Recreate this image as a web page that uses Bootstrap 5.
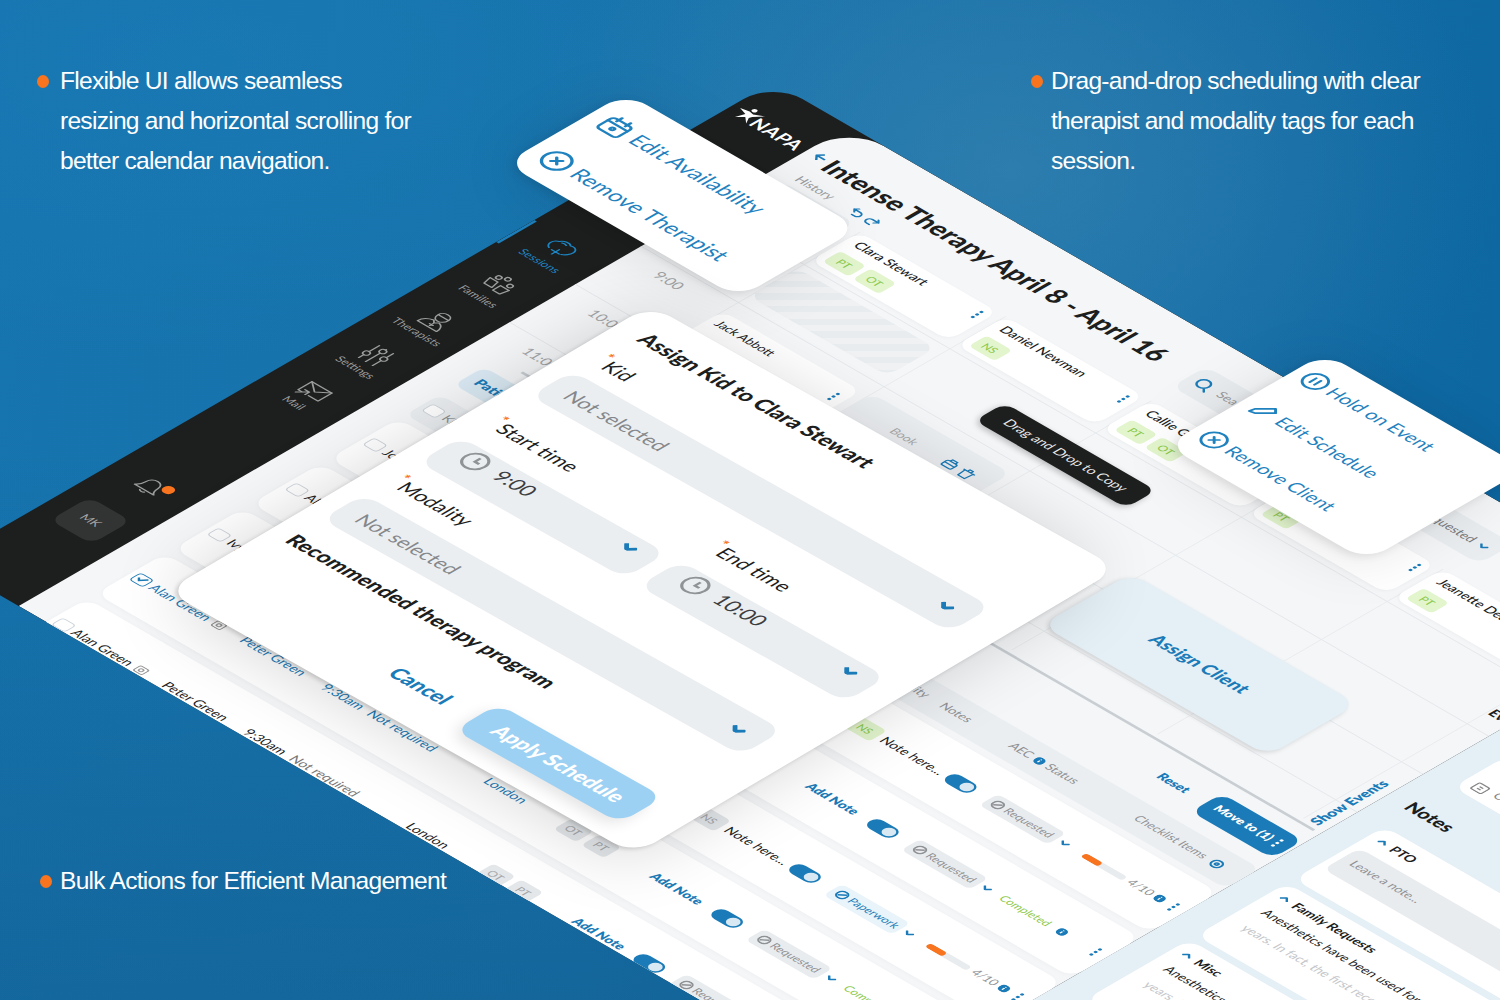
<!DOCTYPE html>
<html lang="en"><head><meta charset="utf-8"><title>NAPA</title>
<link href="https://cdn.jsdelivr.net/npm/bootstrap@5.3.0/dist/css/bootstrap.min.css" rel="stylesheet">
<style>
html,body{margin:0;height:100%;overflow:hidden}
body{font-family:Lato,"Liberation Sans",sans-serif;color:#1d1e1e}
.stage{position:relative;width:1500px;height:1000px;overflow:hidden;background:linear-gradient(180deg,rgba(8,60,100,0) 45%,rgba(8,60,100,.22) 100%),radial-gradient(ellipse 480px 380px at 1010px 170px,rgba(70,140,180,.5),rgba(70,140,180,0)),radial-gradient(ellipse 700px 300px at 200px 60px,rgba(30,130,190,.35),rgba(30,130,190,0)),linear-gradient(100deg,#1674ae 0%,#1772aa 45%,#126ca6 75%,#0c659f 100%)}
.iso{position:absolute;left:0;top:0;width:1400px;height:960px;transform-origin:0 0;transform:matrix(.865,.5,-.865,.5,773,82)}
.appwin{width:100%;height:100%;background:#1d1e1e;border-radius:34px;overflow:hidden;display:flex}
/* sidebar */
.sidebar{width:88px;flex:none;display:flex;flex-direction:column;align-items:center;color:#9b9c9c}
.logo{height:272px;padding-top:36px;color:#fff;font-weight:700;font-size:19px;letter-spacing:.5px}
.logo svg{width:24px;height:22px;fill:#fff;margin-right:-3px}
.sideitem{position:relative;width:88px;height:71px;display:flex;flex-direction:column;align-items:center;font-size:11.5px;line-height:14px;text-align:center}
.sideitem svg{width:30px;height:28px;margin-top:4px;margin-bottom:3px;fill:none;stroke:currentColor;stroke-width:1.5;stroke-linecap:round;stroke-linejoin:round}
.sideitem.on{color:#1d86c4}
.sideitem.on::before{content:"";position:absolute;left:0;top:4px;width:3px;height:44px;background:#1d7fbc}
.bell{position:relative;margin-top:auto;width:28px;height:26px}
.bell svg{width:28px;height:26px;fill:none;stroke:#9b9c9c;stroke-width:1.5;stroke-linejoin:round}
.bell i{position:absolute;right:-6px;top:2px;width:11px;height:11px;border-radius:50%;background:#f8741f}
.mkbox{width:48px;height:46px;border-radius:11px;background:#323333;color:#a5a5a5;font-size:12px;margin:34px 0 104px;display:flex;align-items:center;justify-content:center}
/* workspace */
.work{width:980px;flex:none;background:#f4f6f8;border-radius:40px 0 0 0;display:flex;flex-direction:column}
.headbar{height:100px;flex:none;padding:34px 0 0 13px;display:flex;align-items:flex-start}
.titlecol{width:434px}
.maintitle{display:flex;align-items:center;font-weight:900;font-size:26.4px;line-height:32px;white-space:nowrap}
.maintitle svg{width:12px;height:14px;margin-right:-4px;stroke:#1a7bb8;fill:none;stroke-width:2;margin-top:-5px;margin-left:-4px;flex:none}
.histrow{display:flex;align-items:center;margin:7px 0 0 9px;font-size:12.5px;color:#9a9c9e}
.histrow svg{width:14px;height:12px;fill:none;stroke:#1a7bb8;stroke-width:1.7;stroke-linecap:round;stroke-linejoin:round;margin-left:4px}
.histrow svg:first-of-type{margin-left:22px}
.searchbox{width:160px;height:40px;background:#eaedf0;border-radius:12px;display:flex;align-items:center;padding-left:8px;font-size:13px;color:#9a9c9e;gap:8px}
.searchbox svg{width:18px;height:18px;fill:none;stroke:#1a7bb8;stroke-width:2;stroke-linecap:round}
.reqdrop{width:120px;height:40px;margin-left:75px;background:#eaedf0;border-radius:12px;display:flex;align-items:center;justify-content:flex-end;padding-right:10px;font-size:13px;color:#77797b;gap:6px}
.chev{width:10px;height:6px;fill:none;stroke:#1a7bb8;stroke-width:2;flex:none}
.sched{display:grid;grid-template-columns:112px repeat(5,168.5px) 1fr;grid-template-rows:57px 83px 76px 76px 38px;height:330px;flex:none;background-image:linear-gradient(#e5e8eb 1px,transparent 1px),linear-gradient(90deg,#e9ecee 1px,transparent 1px);background-size:100% 76px,168.5px 100%;background-position:0 64px,-56.5px 0}
.cornerbox{margin:-6px 12px 0 18px;background:#ebeef1;border-radius:10px}
.thcard{background:#fff;border-radius:12px;margin-right:8.5px;padding:5px 8px;position:relative;height:57px;box-shadow:0 1px 4px rgba(0,0,0,.04)}
.nm{font-size:13.5px;font-weight:500;line-height:17px;white-space:nowrap;margin-left:2px}
.tagrow{display:flex;gap:5px;margin:8px 0 0 0}
.tg{width:30px;height:21px;border-radius:5px;font-size:11px;line-height:21px;text-align:center;background:#e2f5cd;color:#8bc94a;flex:none}
.tg.gr{background:#e4e7ea;color:#a3a6a9}
.kebab{width:5px;height:15px;fill:#1a7bb8;flex:none}
.thcard .kebab{position:absolute;right:7px;top:7px}
.hourlbl{font-size:14.5px;color:#a4a6a8;padding-left:36px;padding-top:8px;grid-column:1}
.r2{grid-row:3}.r3{grid-row:4}.r4{grid-row:5}
.hatch{grid-row:2;grid-column:2;margin:15px 8.5px 12px 0;border-radius:12px;background:repeating-linear-gradient(-45deg,#e9ecef 0 9px,#eff1f3 9px 18px)}
.jack{grid-row:3;grid-column:2;margin:18px 8.5px 0 0;height:50px;background:#fff;border-radius:12px;padding:6px 8px;display:flex;justify-content:space-between;font-size:12.5px}
.bookb{grid-row:3;grid-column:3;margin:14px 8.5px 0 0;height:50px;background:#eceff2;border-radius:12px;display:flex;justify-content:flex-end;align-items:center;padding-right:18px;gap:4px;font-size:12px;color:#aaa}
.bookb svg{width:15px;height:15px;fill:none;stroke:#1a7bb8;stroke-width:1.6;stroke-linejoin:round}
.assign{grid-row:3 / span 2;grid-column:5 / span 2;margin:44px 0 4px -8px;width:262px;background:#e4eff6;border-radius:18px;display:flex;align-items:center;justify-content:center;color:#1a7bb8;font-weight:900;font-size:18.5px;box-shadow:0 3px 5px rgba(0,0,0,.14)}
.evcol{grid-column:7;grid-row:1 / span 5;position:relative}
.evtxt{position:absolute;left:2px;top:103px;font-weight:900;font-size:14px;white-space:nowrap}
.showev{position:absolute;left:0;top:246px;writing-mode:vertical-rl;transform:rotate(180deg);font-weight:800;font-size:14.5px;color:#1a7bb8;white-space:nowrap}
.splitter{height:3px;margin:4px 7px 0 57px;background:#c9ced3;flex:none}
.toolrow{display:flex;align-items:center;height:35px;margin-top:15px;padding-left:30px;flex:none}
.ptab{width:110px;height:35px;background:#d9e9f3;border-radius:9px;color:#1a7bb8;font-weight:800;font-size:14px;display:flex;align-items:center;padding-left:10px}
.resetl{color:#1a7bb8;font-weight:800;font-size:13px;margin-left:auto;margin-right:22px}
.moveb{width:94px;height:36px;background:#1a7bb8;border-radius:12px;color:#fff;font-weight:800;font-size:12.5px;display:flex;align-items:center;justify-content:center;gap:5px;margin-right:3px}
.moveb .kebab{fill:#fff}
.trow{display:grid;grid-template-columns:20px 105px 94px 53px 135px 88px 65px 35px 80px 42px 83px 30px 50px 40px 1fr;align-items:center;margin-left:32px;padding-left:5px;width:948px;font-size:13.5px;white-space:nowrap;flex:none}
.trow>.kebab{justify-self:center}
.thd{height:40px;margin-top:18px;background:#ebeef1;border-radius:10px;color:#8f9194;font-size:12.5px}
.tcard{height:80px;margin-top:10px;background:#fff;border-radius:14px;box-shadow:0 1px 5px rgba(0,0,0,.03)}
.thd+.tcard{margin-top:8px}
.hm{margin-left:-30px}
.cbx{width:16px;height:14px;border:1.5px solid #ccd3da;border-radius:4px;background:#fff;display:block}
.cbx.chk{border-color:#1a7bb8;position:relative}
.cbx.chk svg{position:absolute;left:2px;top:1px;width:10px;height:9px;fill:none;stroke:#1a7bb8;stroke-width:2}
.sel{color:#1a7bb8}
.ntxt{color:#777}
.tchips{display:flex;gap:6px}
.tchips .tg{width:26px}
.addn{color:#1a7bb8;font-weight:800;font-size:13px;margin-left:3px}
.tgl{width:30px;height:16px;border-radius:8px;background:#1a7bb8;position:relative;display:block;margin-left:-5px}
.tgl::after{content:"";position:absolute;right:2px;top:2px;width:12px;height:12px;border-radius:50%;background:#d9e9f3}
.stchip{width:79px;height:22px;background:#e9ecef;border-radius:6px;color:#8f9194;font-size:11.5px;display:flex;align-items:center;padding-left:5px;gap:3px}
.stchip svg{width:12px;height:12px;fill:none;stroke:#8f9194;stroke-width:1.8}
.papchip{background:#e8f3fa;color:#1a7bb8}
.papchip svg{stroke:#1a7bb8}
.comp{color:#8bc94a;font-size:11.5px;grid-column:13 / span 2;display:flex;align-items:center;justify-content:space-between;padding-right:23px;margin-left:-8px}
.prog{width:48px;height:7px;border-radius:4px;background:#e9ecef;display:block;overflow:hidden;margin-left:-3px}
.prog i{display:block;height:100%;width:42%;border-radius:4px;background:#f8741f}
.cnt{display:flex;align-items:center;gap:4px;font-size:12px;color:#8f9194}
.inf{width:10px;height:10px;flex:none}
.cklist{grid-column:13 / span 3;display:flex;align-items:center;gap:7px;margin-left:-10px;font-size:12px}
.cklist svg{width:13px;height:13px;fill:none;stroke:#1a7bb8;stroke-width:2;flex:none}
.nameico{display:inline-block;width:12px;height:11px;margin-left:6px;fill:none;stroke:#999;stroke-width:1.4;vertical-align:-1px}
/* notes */
.notes{flex:1;background:#e4eff6;padding:250px 0 0 30px;display:flex;flex-direction:column}
.ncard{background:#fff;border-radius:14px;width:300px;padding:8px 10px;font-size:13px;white-space:nowrap;overflow:hidden}
.ncard svg.c2{width:10px;height:6px;fill:none;stroke:#1a7bb8;stroke-width:2;transform:rotate(180deg)}
.n0{height:62px;display:flex;align-items:flex-end;gap:8px;color:#888}
.n0 svg{width:14px;height:14px;fill:none;stroke:#888;stroke-width:1.5}
.ntitle{font-weight:900;font-size:18.5px;line-height:24px;margin:31px 0 0 -8px;height:48px}
.n1{height:105px}.n2{height:105px;margin-top:8px}.n3{height:120px;margin-top:8px}
.nhead{font-weight:700;font-size:13px;line-height:18px;display:flex;align-items:center;gap:6px}
.nbox{background:#e9ecef;border-radius:9px;height:42px;margin:10px 0 0 -3px;padding:10px;font-size:12.5px;color:#8f9194}
.nb{line-height:27px;margin:2px 0 0 5px}
.nfade{color:#c4c6c9;line-height:26px;margin-left:9px}
/* popups */
.pop{position:absolute;background:#fff;border-radius:24px;box-shadow:0 4px 10px rgba(0,0,0,.10),0 10px 60px rgba(0,0,0,.10);color:#1f82bf;line-height:30px}
.pop svg{fill:none;stroke:#1f82bf;stroke-width:2.2;flex:none;stroke-linecap:round;stroke-linejoin:round}
.popa{left:-74px;top:96px;width:270px;height:140px;padding:6px 0 0 13px;font-size:22px}
.popb{left:590px;top:-48px;width:232px;height:184px;padding:5px 0 0 10px;font-size:18.8px}
.poprow{display:flex;align-items:center;white-space:nowrap}
.popa .poprow{height:68px;gap:6px}
.popa svg{width:30px;height:30px}
.popb .poprow{height:58.5px;gap:4px}
.popb svg{width:26px;height:26px}
.ttip{position:absolute;left:455px;top:187px;width:175px;height:35px;background:#1d1e1e;border-radius:11px;color:#e8e8e8;font-size:13.5px;display:flex;align-items:center;justify-content:center;box-shadow:0 3px 6px rgba(0,0,0,.25)}
/* modal */
.modalx{position:absolute;left:0;top:0;width:538px;height:550px;transform-origin:0 0;transform:matrix(.87,.49,-.88,.52,650,305);background:#fff;border-radius:24px;box-shadow:0 3px 4px rgba(0,0,0,.16),0 10px 70px rgba(0,0,0,.16);padding:21px 36px 0 20px;display:flex;flex-direction:column}
.mtitle{font-weight:900;font-size:21.5px;line-height:28px;white-space:nowrap;margin-left:7px}
.flbl{font-size:20px;line-height:24px;height:24px;margin-left:13px;margin-bottom:21px;white-space:nowrap;position:relative}
.flbl b{color:#f8741f;font-weight:700;font-size:15px;position:absolute;left:-8px;top:-8px}
.fbox{height:48px;background:#ebeef1;border-radius:16px;display:flex;align-items:center;font-size:20px;color:#85888b;padding:0 20px;gap:12px;white-space:nowrap}
.fbox .chev{margin-left:auto;width:15px;height:9px;stroke-width:2.6}
.fbox.tm{color:#3b3d3f;font-size:20.5px;padding-bottom:17px}
.clk{width:26px;height:26px;fill:none;stroke:#909396;stroke-width:2.6;flex:none}
.flbl.lab1{margin-top:21px;margin-bottom:14px}
.twoc{display:flex;gap:16px;margin:34px -8px 0 0}
.twoc>div{flex:1 1 0;min-width:0}
.flbl.modal3{margin-top:19px;margin-bottom:19px}
.rechd{font-weight:900;font-size:21px;line-height:26px;margin-top:22px;white-space:nowrap}
.mfoot{display:flex;align-items:center;justify-content:flex-end;margin-top:36px;padding-right:4px;gap:32px}
.mcancel{color:#1a7bb8;font-weight:900;font-size:21px}
.mapply{width:190px;height:50px;background:#9dd1f3;border-radius:16px;color:#fff;font-weight:900;font-size:21px;display:flex;align-items:center;justify-content:center;box-shadow:0 8px 14px rgba(0,0,0,.10)}
/* captions */
.caps{position:absolute;inset:0;display:flex;flex-direction:column;justify-content:space-between;padding:61px 60px 99px 37px;pointer-events:none;color:#fff;font-family:"Liberation Sans",sans-serif;font-size:24.6px;line-height:40px;letter-spacing:-.75px}
.caprow{display:flex;justify-content:space-between}
.capi{display:flex;gap:11px}
.capi::before{content:"";width:12px;height:13px;border-radius:50%;background:#f8741f;margin-top:14px;flex:none}
.c1{width:400px}.c2b{width:400px;margin-right:9px;gap:8px}
.c1 span{display:block}
.c3{margin-left:3px;gap:8px}
</style></head>
<body>
<svg width="0" height="0" class="d-none">
<symbol id="keb" viewBox="0 0 5 15"><circle cx="2.5" cy="2.5" r="1.7"/><circle cx="2.5" cy="7.5" r="1.7"/><circle cx="2.5" cy="12.5" r="1.7"/></symbol>
<symbol id="chv" viewBox="0 0 10 6"><path d="M1 1l4 4 4-4"/></symbol>
<symbol id="inf" viewBox="0 0 10 10"><circle cx="5" cy="5" r="5" fill="#1a7bb8"/><path d="M5 4.3v3M5 2.3v1" stroke="#fff" stroke-width="1.3"/></symbol>
<symbol id="clk" viewBox="0 0 26 26"><circle cx="13" cy="13" r="11"/><path d="M13 7v6.5h5"/></symbol>
<symbol id="req" viewBox="0 0 12 12"><circle cx="6" cy="6" r="5"/><path d="M3 8.5l6-5"/></symbol>
<symbol id="xc" viewBox="0 0 24 24"><circle cx="12" cy="12" r="10"/><path d="M8 12h8M12 8v8" transform="rotate(45 12 12)"/></symbol>
</svg>
<div class="stage">
 <div class="iso">
  <div class="appwin">
   <aside class="sidebar">
    <div class="logo d-flex align-items-start"><svg viewBox="0 0 24 20"><path d="M11 0a2.4 2.4 0 1 1 .1 4.8A2.4 2.4 0 0 1 11 0zM0 8l9-2 5 1 9-5-7 8-1 3 4 7-7-6-6 6 3-9-9-3z"/></svg><span>NAPA</span></div>
    <div class="sideitem on"><svg viewBox="0 0 30 28"><path d="M7 19C2 17 1 9 7 7c2-4 8-5 11-2 5-2 10 2 8 8-1 3-3 5-5 6"/><path d="M15 15v9M10.500 19.500h9"/><path d="M10 7c2-1 3-1 5 0"/></svg>Sessions</div>
    <div class="sideitem"><svg viewBox="0 0 30 28"><circle cx="8" cy="7" r="2.500"/><circle cx="23" cy="9" r="2.500"/><circle cx="15" cy="3.500" r="2.500"/><path d="M3 12h9l2 9H5zM17 14h10l-2 9h-8z"/></svg>Families</div>
    <div class="sideitem"><svg viewBox="0 0 30 28"><path d="M10 8c0-7 12-7 12 0 0 5-3 7-6 7s-6-2-6-7zM10 8h12"/><path d="M4 26c0-6 5-9 9-10l3 3 3-3c4 1 7 4 7 10z"/><path d="M14 22h4M16 20v4"/></svg>Therapists</div>
    <div class="sideitem"><svg viewBox="0 0 30 28"><path d="M7 2v24M15 2v24M23 2v24"/><circle cx="7" cy="17" r="3" fill="#1d1e1e"/><circle cx="15" cy="6" r="3" fill="#1d1e1e"/><circle cx="23" cy="13" r="3" fill="#1d1e1e"/></svg>Settings</div>
    <div class="sideitem"><svg viewBox="0 0 30 28"><path d="M8 22H4V6h23v16H16"/><path d="M4 6l12 9 11-9"/><path d="M5 26l8-8M8 18h5v5"/></svg>Mail</div>
    <div class="bell"><svg viewBox="0 0 28 26"><path d="M3 20c3-2 4-4 4-9 0-4 3-7 7-7s7 3 7 7c0 5 1 7 4 9z"/><path d="M11 22c1 2 5 2 6 0"/></svg><i></i></div>
    <div class="mkbox">MK</div>
   </aside>
   <main class="work">
    <div class="headbar">
     <div class="titlecol">
      <div class="maintitle"><svg viewBox="0 0 12 14"><path d="M11 7H2M6 2L1.500 7 6 12"/></svg><span class="ms-2">Intense Therapy April 8 - April 16</span></div>
      <div class="histrow">History<svg viewBox="0 0 14 12"><path d="M5 1L2 4l3 3M2 4h7a3.500 3.500 0 0 1 0 7H6"/></svg><svg viewBox="0 0 14 12"><path d="M9 1l3 3-3 3M12 4H5a3.500 3.500 0 0 0 0 7h3"/></svg></div>
     </div>
     <div class="searchbox"><svg viewBox="0 0 18 18"><circle cx="8" cy="8" r="6"/><path d="M13 13l3 3"/></svg>Search</div>
     <div class="reqdrop">Requested<svg class="chev"><use href="#chv"/></svg></div>
    </div>
    <div class="sched">
     <div class="cornerbox"></div>
     <div class="thcard"><div class="nm">Clara Stewart</div><div class="tagrow"><span class="tg">PT</span><span class="tg">OT</span></div><svg class="kebab"><use href="#keb"/></svg></div>
     <div class="thcard"><div class="nm">Daniel Newman</div><div class="tagrow"><span class="tg">NS</span></div><svg class="kebab"><use href="#keb"/></svg></div>
     <div class="thcard"><div class="nm">Callie Goodwin</div><div class="tagrow"><span class="tg">PT</span><span class="tg">OT</span></div><svg class="kebab"><use href="#keb"/></svg></div>
     <div class="thcard"><div class="nm">Ann Ross</div><div class="tagrow"><span class="tg">PT</span></div><svg class="kebab"><use href="#keb"/></svg></div>
     <div class="thcard"><div class="nm">Jeanette Dean</div><div class="tagrow"><span class="tg">PT</span></div><svg class="kebab"><use href="#keb"/></svg></div>
     <div class="evcol"><span class="evtxt">Events</span><span class="showev">Show Events</span></div>
     <div class="hourlbl">&nbsp;</div>
     <div class="hatch"></div>
     <div class="hourlbl r2">9:00</div>
     <div class="jack"><span>Jack Abbott</span><svg class="kebab mt-2"><use href="#keb"/></svg></div>
     <div class="bookb"><span class="me-auto ms-5">Book</span><svg viewBox="0 0 16 16"><rect x="2" y="5" width="12" height="9" rx="2"/><path d="M5 5V2h6v3M2 9h12"/></svg><svg viewBox="0 0 16 16"><path d="M3 5h10l-1 10H4zM1 5h14M6 5V2h4v3"/></svg></div>
     <div class="assign">Assign Client</div>
     <div class="hourlbl r3">10:00</div>
     <div class="hourlbl r4">11:00</div>
    </div>
    <div class="splitter"></div>
    <div class="toolrow"><div class="ptab">Patients</div><span class="resetl">Reset</span><div class="moveb">Move to (1)<svg class="kebab"><use href="#keb"/></svg></div></div>
    <div class="trow thd"><span class="cbx"></span><span>Kid</span><span>Therapist</span><span>Time</span><span>AEC</span><span>Location</span><span>Tags</span><span class="hm">Modality</span><span>Notes</span><span class="d-flex align-items-center gap-1">AEC<svg class="inf"><use href="#inf"/></svg></span><span>Status</span><span></span><span class="cklist">Checklist Items<svg viewBox="0 0 13 13"><circle cx="6.500" cy="6.500" r="5"/><circle cx="6.500" cy="6.500" r="1.500"/></svg></span></div>
    <div class="trow tcard"><span class="cbx"></span><span>Jordan Mills</span><span>Peter Green</span><span>9:30am</span><span class="ntxt">Not required</span><span>London</span><span class="tchips"><span class="tg gr">OT</span><span class="tg gr">PT</span></span><span><span class="tg d-block">NS</span></span><span>Note here...</span><span class="tgl"></span><span class="stchip"><svg><use href="#req"/></svg>Requested</span><svg class="chev"><use href="#chv"/></svg><span class="prog"><i></i></span><span class="cnt">4/10<svg class="inf"><use href="#inf"/></svg></span><svg class="kebab"><use href="#keb"/></svg></div>
    <div class="trow tcard"><span class="cbx"></span><span>Alice Reed</span><span>Peter Green</span><span>9:30am</span><span class="ntxt">Not required</span><span>London</span><span class="tchips"><span class="tg gr">OT</span><span class="tg gr">PT</span></span><span></span><span class="addn">Add Note</span><span class="tgl"></span><span class="stchip"><svg><use href="#req"/></svg>Requested</span><svg class="chev"><use href="#chv"/></svg><span class="comp">Completed<svg class="inf"><use href="#inf"/></svg></span><svg class="kebab"><use href="#keb"/></svg></div>
    <div class="trow tcard"><span class="cbx"></span><span>Ivy Stone</span><span>Peter Green</span><span>9:30am</span><span class="ntxt">Not required</span><span>London</span><span class="tchips"><span class="tg gr">OT</span><span class="tg gr">PT</span></span><span><span class="tg gr d-block">NS</span></span><span>Note here...</span><span class="tgl"></span><span class="stchip papchip"><svg><use href="#req"/></svg>Paperwork</span><svg class="chev"><use href="#chv"/></svg><span class="prog"><i></i></span><span class="cnt">4/10<svg class="inf"><use href="#inf"/></svg></span><svg class="kebab"><use href="#keb"/></svg></div>
    <div class="trow tcard sel"><span class="cbx chk"><svg viewBox="0 0 10 9"><path d="M1 4l3 3 5-6"/></svg></span><span>Alan Green<svg class="nameico" viewBox="0 0 12 11"><rect x="1" y="1" width="10" height="9" rx="2"/><circle cx="6" cy="5.500" r="2"/></svg></span><span>Peter Green</span><span>9:30am</span><span>Not required</span><span>London</span><span class="tchips"><span class="tg gr">OT</span><span class="tg gr">PT</span></span><span></span><span class="addn">Add Note</span><span class="tgl"></span><span class="stchip"><svg><use href="#req"/></svg>Requested</span><svg class="chev"><use href="#chv"/></svg><span class="comp">Completed<svg class="inf"><use href="#inf"/></svg></span><svg class="kebab"><use href="#keb"/></svg></div>
    <div class="trow tcard"><span class="cbx"></span><span>Alan Green<svg class="nameico" viewBox="0 0 12 11"><rect x="1" y="1" width="10" height="9" rx="2"/><circle cx="6" cy="5.500" r="2"/></svg></span><span>Peter Green</span><span>9:30am</span><span class="ntxt">Not required</span><span>London</span><span class="tchips"><span class="tg gr">OT</span><span class="tg gr">PT</span></span><span></span><span class="addn">Add Note</span><span class="tgl"></span><span class="stchip"><svg><use href="#req"/></svg>Requested</span><svg class="chev"><use href="#chv"/></svg><span></span><span></span><svg class="kebab"><use href="#keb"/></svg></div>
   </main>
   <section class="notes">
    <div class="ncard n0"><svg viewBox="0 0 14 14"><rect x="1" y="2" width="12" height="11" rx="2"/><path d="M5 6h4M5 9h4"/></svg>Calendar</div>
    <div class="ntitle">Notes</div>
    <div class="ncard n1"><div class="nhead"><svg class="c2" viewBox="0 0 10 6"><use href="#chv"/></svg>PTO</div><div class="nbox">Leave a note...</div></div>
    <div class="ncard n2"><div class="nhead"><svg class="c2" viewBox="0 0 10 6"><use href="#chv"/></svg>Family Requests</div><div class="nb">Anesthetics have been used for</div><div class="nfade">years. In fact, the first recorded</div></div>
    <div class="ncard n3"><div class="nhead"><svg class="c2" viewBox="0 0 10 6"><use href="#chv"/></svg>Misc</div><div class="nb">Anesthetics have been used for</div><div class="nfade">years. In fact, the first recorded</div></div>
   </section>
  </div>
  <div class="pop popa">
   <div class="poprow"><svg viewBox="0 0 24 24"><rect x="3" y="5" width="18" height="16" rx="3"/><path d="M3 10h18M8 2v5M16 2v5"/><circle cx="12" cy="15" r="1.500"/></svg>Edit Availability</div>
   <div class="poprow"><svg viewBox="0 0 24 24"><use href="#xc"/></svg>Remove Therapist</div>
  </div>
  <div class="pop popb">
   <div class="poprow"><svg viewBox="0 0 24 24"><circle cx="12" cy="12" r="10"/><path d="M9.500 8.500v7M14.500 8.500v7"/></svg>Hold on Event</div>
   <div class="poprow"><svg viewBox="0 0 24 24"><path d="M4 20l1-5L16 4l4 4L9 19z"/></svg>Edit Schedule</div>
   <div class="poprow"><svg viewBox="0 0 24 24"><use href="#xc"/></svg>Remove Client</div>
  </div>
  <div class="ttip">Drag and Drop to Copy</div>
 </div>
 <form class="modalx">
  <div class="mtitle">Assign Kid to Clara Stewart</div>
  <div class="flbl lab1"><b>*</b>Kid</div>
  <div class="fbox">Not selected<svg class="chev"><use href="#chv"/></svg></div>
  <div class="twoc">
   <div><div class="flbl"><b>*</b>Start time</div><div class="fbox tm"><svg class="clk"><use href="#clk"/></svg>9:00<svg class="chev"><use href="#chv"/></svg></div></div>
   <div><div class="flbl"><b>*</b>End time</div><div class="fbox tm"><svg class="clk"><use href="#clk"/></svg>10:00<svg class="chev"><use href="#chv"/></svg></div></div>
  </div>
  <div class="flbl modal3"><b>*</b>Modality</div>
  <div class="fbox">Not selected<svg class="chev"><use href="#chv"/></svg></div>
  <div class="rechd">Recommended therapy program</div>
  <div class="mfoot"><span class="mcancel">Cancel</span><div class="mapply">Apply Schedule</div></div>
 </form>
 <div class="caps">
  <div class="caprow">
   <div class="capi c1"><div><span>Flexible UI allows seamless</span><span>resizing and horizontal scrolling for</span><span>better calendar navigation.</span></div></div>
   <div class="capi c2b"><div>Drag-and-drop scheduling with clear<br>therapist and modality tags for each<br>session.</div></div>
  </div>
  <div class="capi c3"><div>Bulk Actions for Efficient Management</div></div>
 </div>
</div>
<script src="https://cdn.jsdelivr.net/npm/bootstrap@5.3.0/dist/js/bootstrap.bundle.min.js"></script>
</body></html>
